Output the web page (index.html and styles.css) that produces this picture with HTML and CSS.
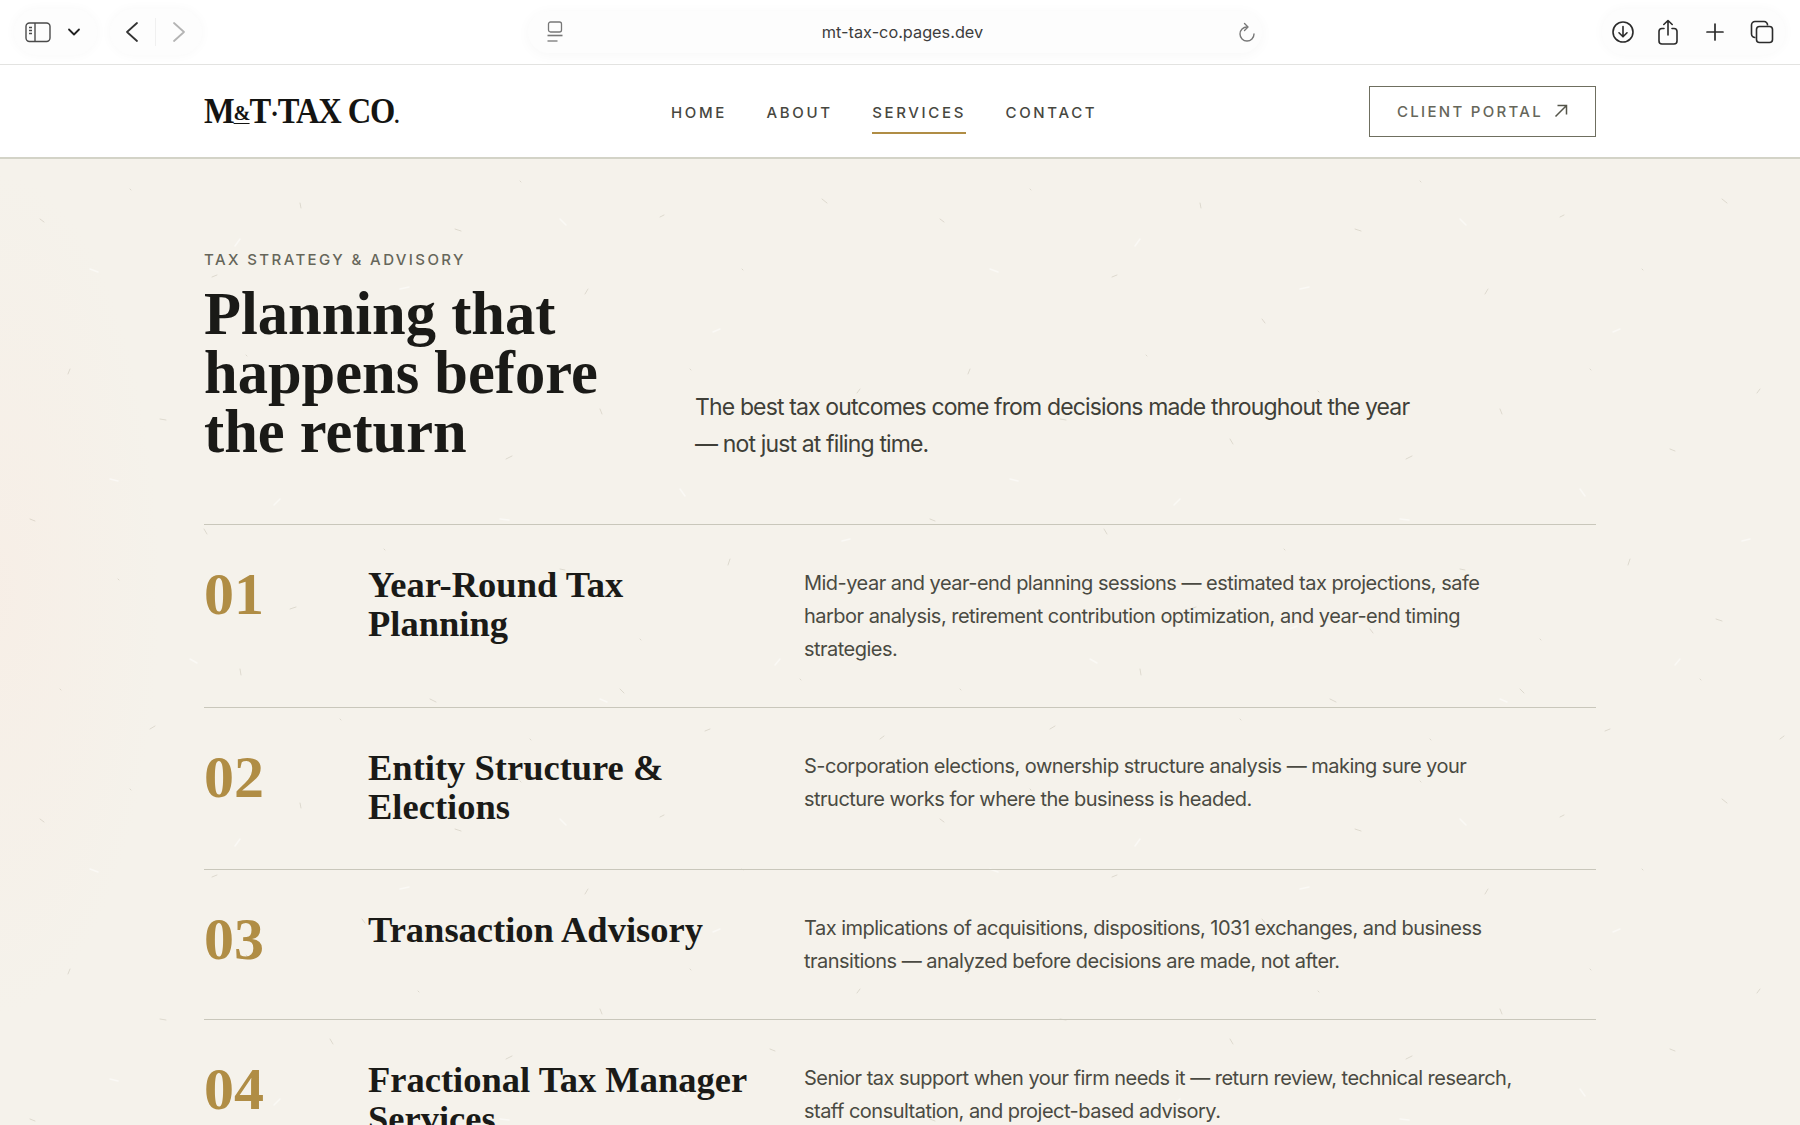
FILE: index.html
```html
<!DOCTYPE html>
<html lang="en">
<head>
<meta charset="utf-8">
<title>M&amp;T Tax Co. — Services</title>
<link rel="stylesheet" href="styles.css">
</head>
<body>
<div class="toolbar">
  <div class="pill pill-side">
    <svg viewBox="0 0 26 24" width="26" height="24" fill="none" stroke="#4a4a4a" stroke-width="1.4"><rect x="1" y="3" width="24" height="18.500" rx="3.500"/><path d="M10 3v18.500"/><path d="M4 7.500h3M4 10.500h3M4 13.500h3" stroke-width="1.300"/></svg>
    <svg viewBox="0 0 14 10" width="14" height="10" fill="none" stroke="#222" stroke-width="1.800" stroke-linecap="round" stroke-linejoin="round"><path d="M2 2.500l5 5 5-5"/></svg>
  </div>
  <div class="pill pill-nav">
    <svg viewBox="0 0 14 24" width="14" height="24" fill="none" stroke="#333" stroke-width="1.800" stroke-linecap="round" stroke-linejoin="round"><path d="M12 3L2 12l10 9"/></svg>
    <span class="sep"></span>
    <svg viewBox="0 0 14 24" width="14" height="24" fill="none" stroke="#b4b4b4" stroke-width="1.800" stroke-linecap="round" stroke-linejoin="round"><path d="M2 3l10 9-10 9"/></svg>
  </div>
  <div class="urlbar">
    <svg viewBox="0 0 16 22" width="16" height="22" fill="none" stroke="#777" stroke-width="1.300"><rect x="1.500" y="1" width="13" height="10" rx="2"/><path d="M.500 14.500h15" stroke-width="1.600"/><path d="M.500 20h10" stroke-width="1.300"/></svg>
    <span class="url">mt-tax-co.pages.dev</span>
    <svg viewBox="0 0 18 22" width="18" height="22" fill="none" stroke="#777" stroke-width="1.400" stroke-linecap="round" stroke-linejoin="round"><path d="M9 6a7 7 0 1 0 7 7"/><path d="M6.500 2.500L10 6l-3.500 3.500"/></svg>
  </div>
  <div class="pill pill-tools">
    <svg viewBox="0 0 24 24" width="24" height="24" fill="none" stroke="#2b2b2b" stroke-width="1.600" stroke-linecap="round" stroke-linejoin="round"><circle cx="12" cy="12" r="10"/><path d="M12 6.500v10M8 12.800l4 4 4-4"/></svg>
    <svg viewBox="0 0 22 26" width="22" height="26" fill="none" stroke="#2b2b2b" stroke-width="1.600" stroke-linecap="round" stroke-linejoin="round"><path d="M7 9.500H5a3 3 0 0 0-3 3V22a3 3 0 0 0 3 3h12a3 3 0 0 0 3-3v-9.500a3 3 0 0 0-3-3h-2"/><path d="M11 16V1.500M6.800 5.500L11 1.500l4.200 4"/></svg>
    <svg class="ic-plus" viewBox="0 0 20 20" width="20" height="20" fill="none" stroke="#2b2b2b" stroke-width="1.700" stroke-linecap="round"><path d="M10 2v16M2 10h16"/></svg>
    <svg class="ic-tabs" viewBox="0 0 24 24" width="24" height="24" fill="none" stroke="#2b2b2b" stroke-width="1.600"><rect x="6.500" y="6.500" width="16" height="16" rx="3"/><path d="M5.500 17.500A3.500 3.500 0 0 1 1.500 14V5A3.500 3.500 0 0 1 5 1.500h9a3.500 3.500 0 0 1 3.500 4"/></svg>
  </div>
</div>

<header class="site-header">
  <div class="wrap header-row">
    <div class="logo-box"><a class="logo">M<span class="amp">&amp;</span>T<span class="dot">·</span>TAX CO<span class="logo-end">.</span></a></div>
    <nav class="nav">
      <a>HOME</a>
      <a>ABOUT</a>
      <a class="active">SERVICES</a>
      <a>CONTACT</a>
    </nav>
    <a class="portal">CLIENT PORTAL
      <svg viewBox="0 0 14 14" width="14" height="14" fill="none" stroke="#55554a" stroke-width="1.500"><path d="M1.500 12.500L12.500 1.500M3.500 1.500h9v9"/></svg>
    </a>
  </div>
</header>

<main class="page">
  <div class="wrap">
    <section class="hero">
      <div class="hero-left">
        <p class="eyebrow">TAX STRATEGY &amp; ADVISORY</p>
        <h1>Planning that<br>happens before<br>the return</h1>
      </div>
      <p class="lead">The best tax outcomes come from decisions made throughout the year — not just at filing time.</p>
    </section>

    <section class="services">
      <article class="row">
        <div class="num">01</div>
        <h2>Year-Round Tax Planning</h2>
        <p>Mid-year and year-end planning sessions — estimated tax projections, safe harbor analysis, retirement contribution optimization, and year-end timing strategies.</p>
      </article>
      <article class="row">
        <div class="num">02</div>
        <h2>Entity Structure &amp; Elections</h2>
        <p>S-corporation elections, ownership structure analysis — making sure your structure works for where the business is headed.</p>
      </article>
      <article class="row">
        <div class="num">03</div>
        <h2>Transaction Advisory</h2>
        <p>Tax implications of acquisitions, dispositions, 1031 exchanges, and business transitions — analyzed before decisions are made, not after.</p>
      </article>
      <article class="row">
        <div class="num">04</div>
        <h2>Fractional Tax Manager Services</h2>
        <p>Senior tax support when your firm needs it — return review, technical research, staff consultation, and project-based advisory.</p>
      </article>
    </section>
  </div>
</main>
</body>
</html>
```

FILE: styles.css
```css
* { box-sizing: border-box; }
html, body { margin: 0; height: 1125px; overflow: hidden; }
body { font-family: "Inter", "Liberation Sans", sans-serif; background: #f5f2eb; color: #1a1a17; }

.toolbar {
  height: 65px;
  background: #fff;
  border-bottom: 1px solid #e3e3e1;
  display: flex;
  align-items: center;
  padding: 0 15px 1px 14px;
}
.pill {
  height: 46px;
  border-radius: 23px;
  background: #fdfdfd;
  box-shadow: 0 0 12px rgba(0,0,0,.03);
  display: flex;
  align-items: center;
}
.pill-side { width: 83px; padding-left: 11px; gap: 16px; }
.pill-nav { width: 92px; margin-left: 13px; padding-left: 15px; gap: 16px; }
.sep { width: 1px; height: 28px; background: #f0f0f0; }
.urlbar {
  width: 734px;
  height: 42px;
  margin-left: 326px;
  margin-top: 1px;
  border-radius: 21px;
  background: #fdfdfd;
  box-shadow: 0 2px 14px rgba(0,0,0,.035);
  display: flex;
  align-items: center;
  justify-content: space-between;
  padding: 0 6px 0 19px;
}
.url { font-size: 16.300px; color: #3d3d3d; margin-left: 4px; }
.pill-tools { width: 183px; margin-left: auto; padding-left: 9px; gap: 22px; }
.ic-plus { margin-left: 4px; }
.ic-tabs { margin-left: 3px; }

.wrap { width: 1392px; margin: 0 auto; }
.site-header { height: 94px; background: #fff; border-bottom: 2px solid #d3d3c7; }
.header-row { height: 92px; display: flex; align-items: center; }
.logo-box { width: 467px; }
.logo {
  display: inline-block;
  margin-top: 2px;
  font-family: "Liberation Serif", serif;
  font-weight: 700;
  font-size: 35px;
  letter-spacing: -1.2px;
  color: #141412;
  white-space: nowrap;
  transform: scaleX(.93);
  transform-origin: left center;
}
.amp { font-size: 22px; vertical-align: 3px; text-decoration: underline; text-decoration-thickness: 1px; text-underline-offset: 3px; }
.dot { font-size: 28px; }
.logo-end { font-size: 22px; }
.nav { display: flex; gap: 39.500px; margin-top: 4px; }
.nav a {
  font-size: 15px;
  font-weight: 500;
  letter-spacing: 2.650px;
  color: #47473f;
  padding: 10px 0 10px;
  border-bottom: 2px solid transparent;
}
.nav a.active { border-bottom-color: #b08d45; }
.portal {
  margin-left: auto;
  width: 227px;
  height: 51px;
  border: 1.500px solid #6f6f60;
  display: flex;
  align-items: center;
  justify-content: center;
  gap: 11px;
  font-size: 15px;
  font-weight: 500;
  letter-spacing: 2.300px;
  color: #66665a;
}

.page {
  height: 966px;
  overflow: hidden;
  background-color: #f5f2eb;
  background-image:
    url("data:image/svg+xml,%3Csvg xmlns='http://www.w3.org/2000/svg' width='900' height='600' fill='none' stroke-linecap='round'%3E%3Cg stroke='%23a89f8c' stroke-opacity='.3' stroke-width='1'%3E%3Cpath d='M40 60l4 3M130 30l1 1M212 118l5-2M300 44l1 5M362 160l3 4M455 70l6 2M520 22l1 1M588 130l-3 5M660 58l4-2M742 110l1 1M822 40l5 4M70 210l-2 5M160 260l6 1M246 196l1 1M330 280l3 5M418 232l1 1M506 300l6-3M600 250l2 5M690 210l1 1M770 290l5 2M860 230l-3 4M30 360l5 2M118 420l1 1M204 370l3 5M290 450l6-2M384 390l1 1M470 470l3 4M560 410l5 1M640 480l1 1M730 400l-2 6M816 460l6 2M60 530l1 1M150 570l5-3M240 510l1 6M340 560l1 1M430 540l6 3M530 580l1 1M620 530l4 4M710 570l-5 2M800 520l1 1M880 580l4-3'/%3E%3C/g%3E%3Cg stroke='%23fff' stroke-opacity='.5' stroke-width='1.500'%3E%3Cpath d='M90 110l8 3M240 80l-5 7M400 130l9-2M560 60l6 6M720 170l-7 3M110 320l8 2M280 340l-6 6M500 360l9 1M680 330l5 7M850 380l-8 2M190 500l7 4M390 470l7-3M600 540l7 3M780 500l-5 6'/%3E%3C/g%3E%3C/svg%3E"),
    radial-gradient(ellipse 160px 420px at 0 45%, rgba(250,232,222,.35), transparent);
  background-size: 900px 600px, 100% 100%;
}
.hero {
  display: grid;
  grid-template-columns: 491px 1fr;
  align-items: end;
  height: 365px;
  padding-top: 84px;
  padding-bottom: 63px;
}
.eyebrow {
  margin: 0 0 15px;
  font-size: 15px;
  font-weight: 500;
  letter-spacing: 2.400px;
  line-height: 18px;
  color: #66665a;
}
h1 {
  margin: 0;
  font-family: "Liberation Serif", serif;
  font-weight: 700;
  font-size: 60.500px;
  line-height: 59px;
  color: #1a1a17;
}
.lead {
  margin: 0 0 -2px;
  width: 730px;
  font-size: 23px;
  line-height: 37px;
  letter-spacing: -0.860px;
  color: #3f3f38;
}
.services { border-top: 1px solid #c9c7bb; }
.row {
  display: grid;
  grid-template-columns: 164px 436px 1fr;
  padding: 40px 0 41px;
  border-bottom: 1px solid #c9c7bb;
}
.num {
  font-family: "Liberation Serif", serif;
  font-weight: 700;
  font-size: 60px;
  line-height: 58px;
  padding-bottom: 10px;
  color: #b08d45;
}
h2 {
  margin: 0;
  padding-bottom: 2px;
  font-family: "Liberation Serif", serif;
  font-weight: 700;
  font-size: 36.500px;
  line-height: 39px;
  color: #1a1a17;
  width: 390px;
}
.row p {
  margin: 2px 0 0;
  max-width: 715px;
  font-size: 20px;
  line-height: 33px;
  letter-spacing: -0.520px;
  color: #4a4a42;
}
```
